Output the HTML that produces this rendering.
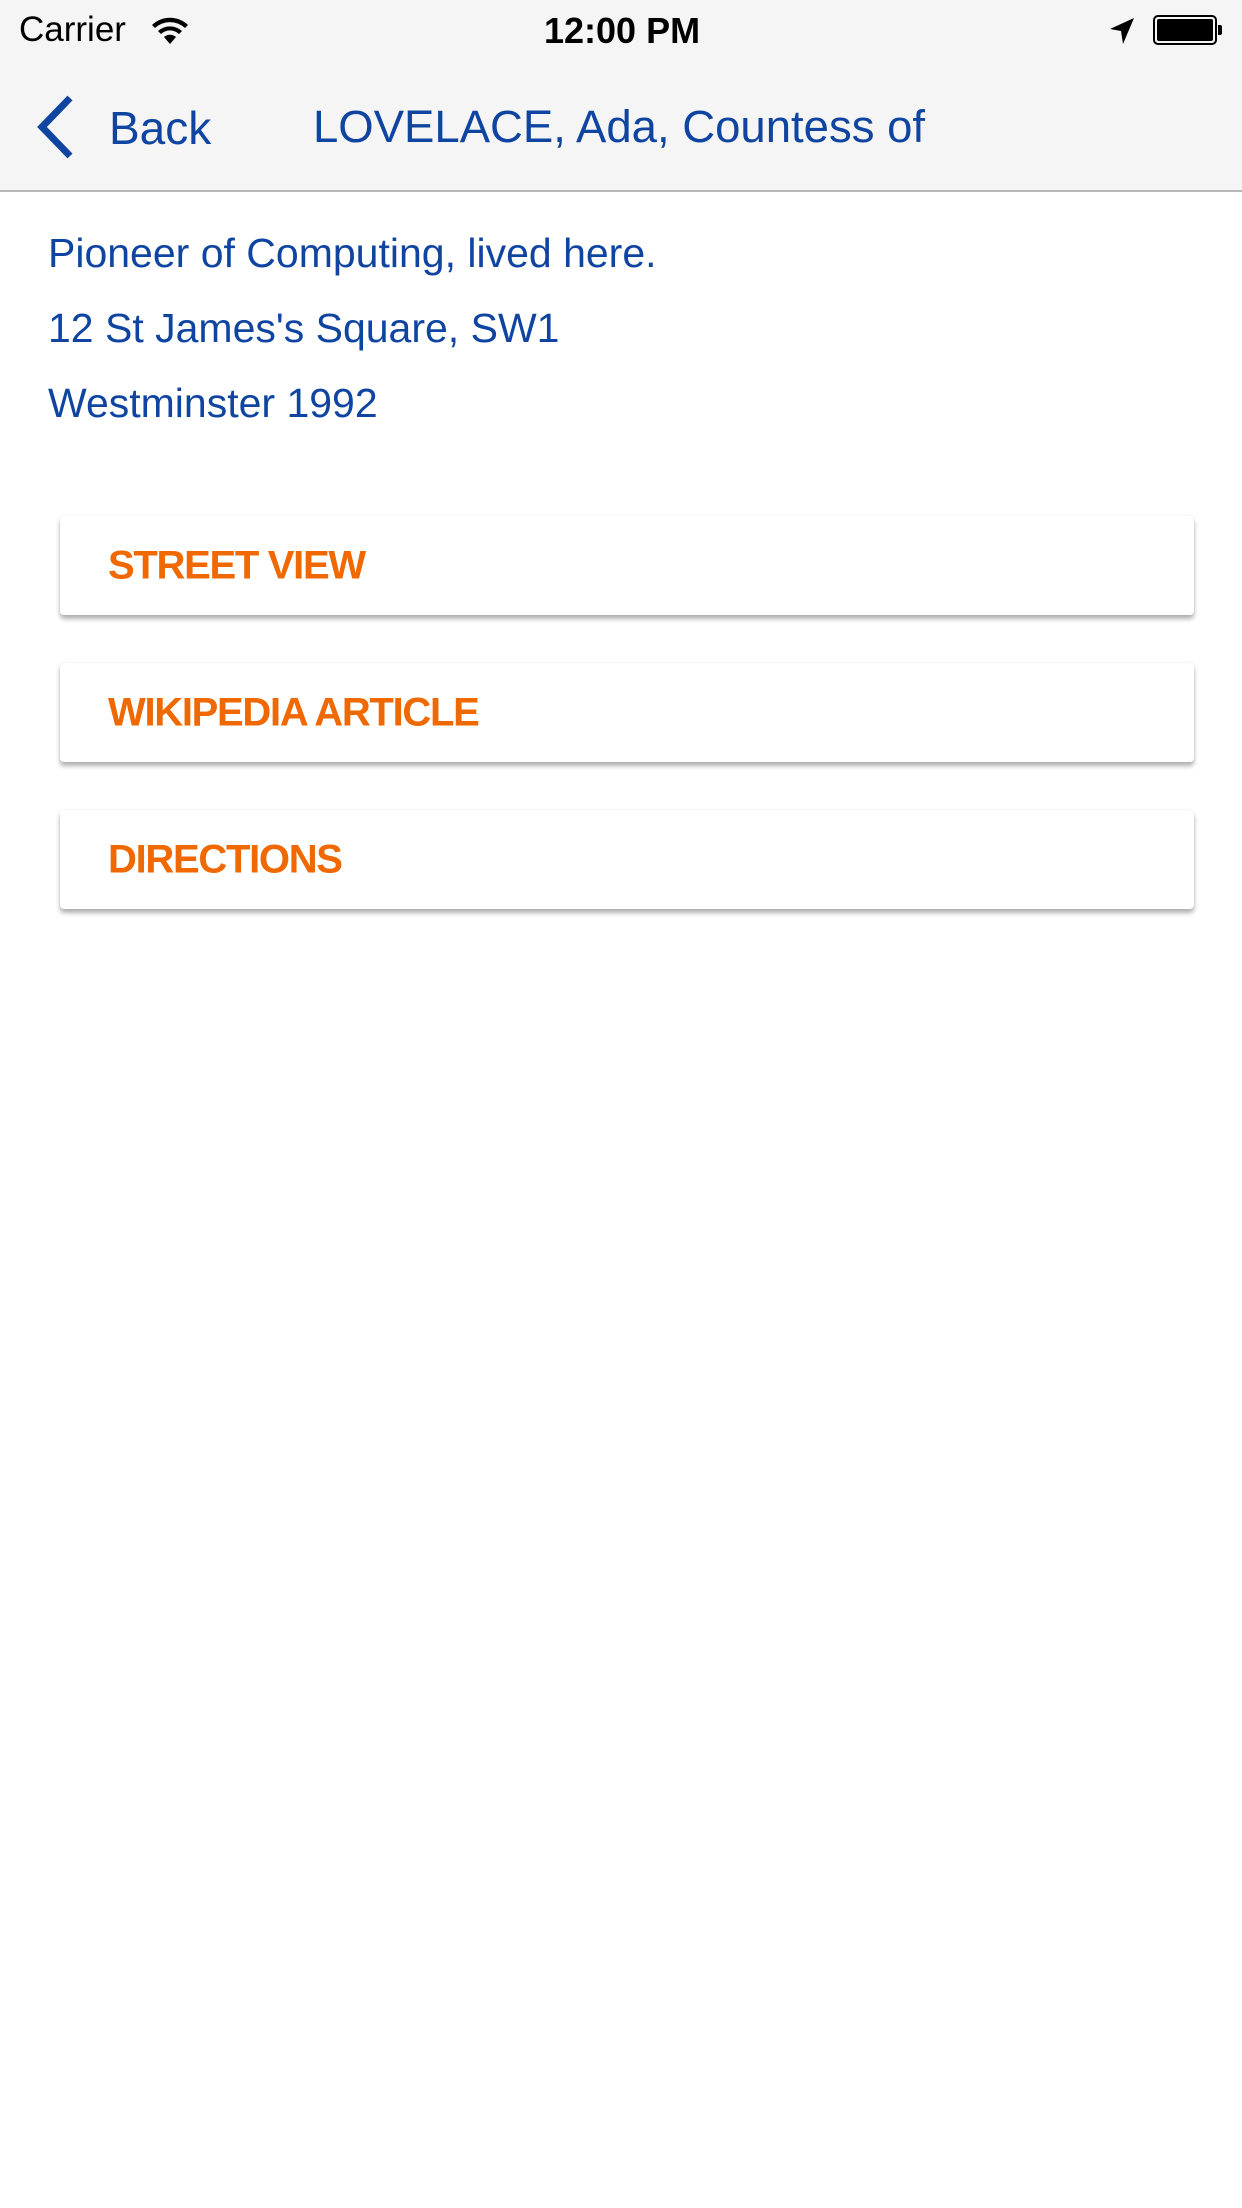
<!DOCTYPE html>
<html><head><meta charset="utf-8"><style>
*{margin:0;padding:0;box-sizing:border-box}
body{width:1242px;height:2208px;background:#fff;font-family:"Liberation Sans",sans-serif;position:relative;overflow:hidden}
.top{position:absolute;left:0;top:0;width:1242px;height:192px;background:#f5f5f5;border-bottom:2px solid #b8b8b8}
.abs{position:absolute;white-space:nowrap}
.blue{color:#0f45a0}
.btn{position:absolute;left:60px;width:1134px;height:99px;background:#fff;border-radius:4px;box-shadow:0 4px 5px rgba(0,0,0,0.3),0 0 2px rgba(0,0,0,0.08)}
.btn span{position:absolute;left:48px;top:50%;transform:translateY(-50%);color:#f06800;font-weight:bold;font-size:40px;letter-spacing:-1.3px}
</style></head><body>
<div class="top"></div>
<div class="abs" style="left:19px;top:10px;font-size:35px;color:#000">Carrier</div>
<svg class="abs" style="left:150px;top:14px" width="40" height="32" viewBox="0 0 40 32"><path d="M2 11a26 26 0 0 1 36 0l-3 3a22 22 0 0 0-30 0z M8 17a18 18 0 0 1 24 0l-3 3a13 13 0 0 0-18 0z M14 23a9 9 0 0 1 12 0l-6 7z" fill="#000"/></svg>
<div class="abs" style="left:544px;top:10px;font-size:36px;font-weight:bold;color:#000">12:00 PM</div>
<svg class="abs" style="left:1108px;top:16px" width="28" height="30" viewBox="0 0 28 30"><path d="M26 2L2 13l11 2 2 13z" fill="#000"/></svg>
<div class="abs" style="left:1153px;top:15px;width:64px;height:30px;border:2px solid #000;border-radius:5px;padding:2px"><div style="width:100%;height:100%;background:#000;border-radius:2px"></div></div>
<div class="abs" style="left:1218px;top:25px;width:4px;height:10px;background:#000;border-radius:0 2px 2px 0"></div>
<svg class="abs" style="left:34px;top:94px" width="44" height="66" viewBox="0 0 44 66"><path d="M36 4L8 33l28 29" fill="none" stroke="#0f45a0" stroke-width="7"/></svg>
<div class="abs blue" style="left:109px;top:101px;font-size:46px">Back</div>
<div class="abs blue" style="left:313px;top:101px;font-size:45.5px">LOVELACE, Ada, Countess of</div>
<div class="abs blue" style="left:48px;top:230px;font-size:41px">Pioneer of Computing, lived here.</div>
<div class="abs blue" style="left:48px;top:305px;font-size:41px">12 St James's Square, SW1</div>
<div class="abs blue" style="left:48px;top:380px;font-size:41px">Westminster 1992</div>
<div class="btn" style="top:516px"><span>STREET VIEW</span></div>
<div class="btn" style="top:663px"><span>WIKIPEDIA ARTICLE</span></div>
<div class="btn" style="top:810px"><span>DIRECTIONS</span></div>
</body></html>
